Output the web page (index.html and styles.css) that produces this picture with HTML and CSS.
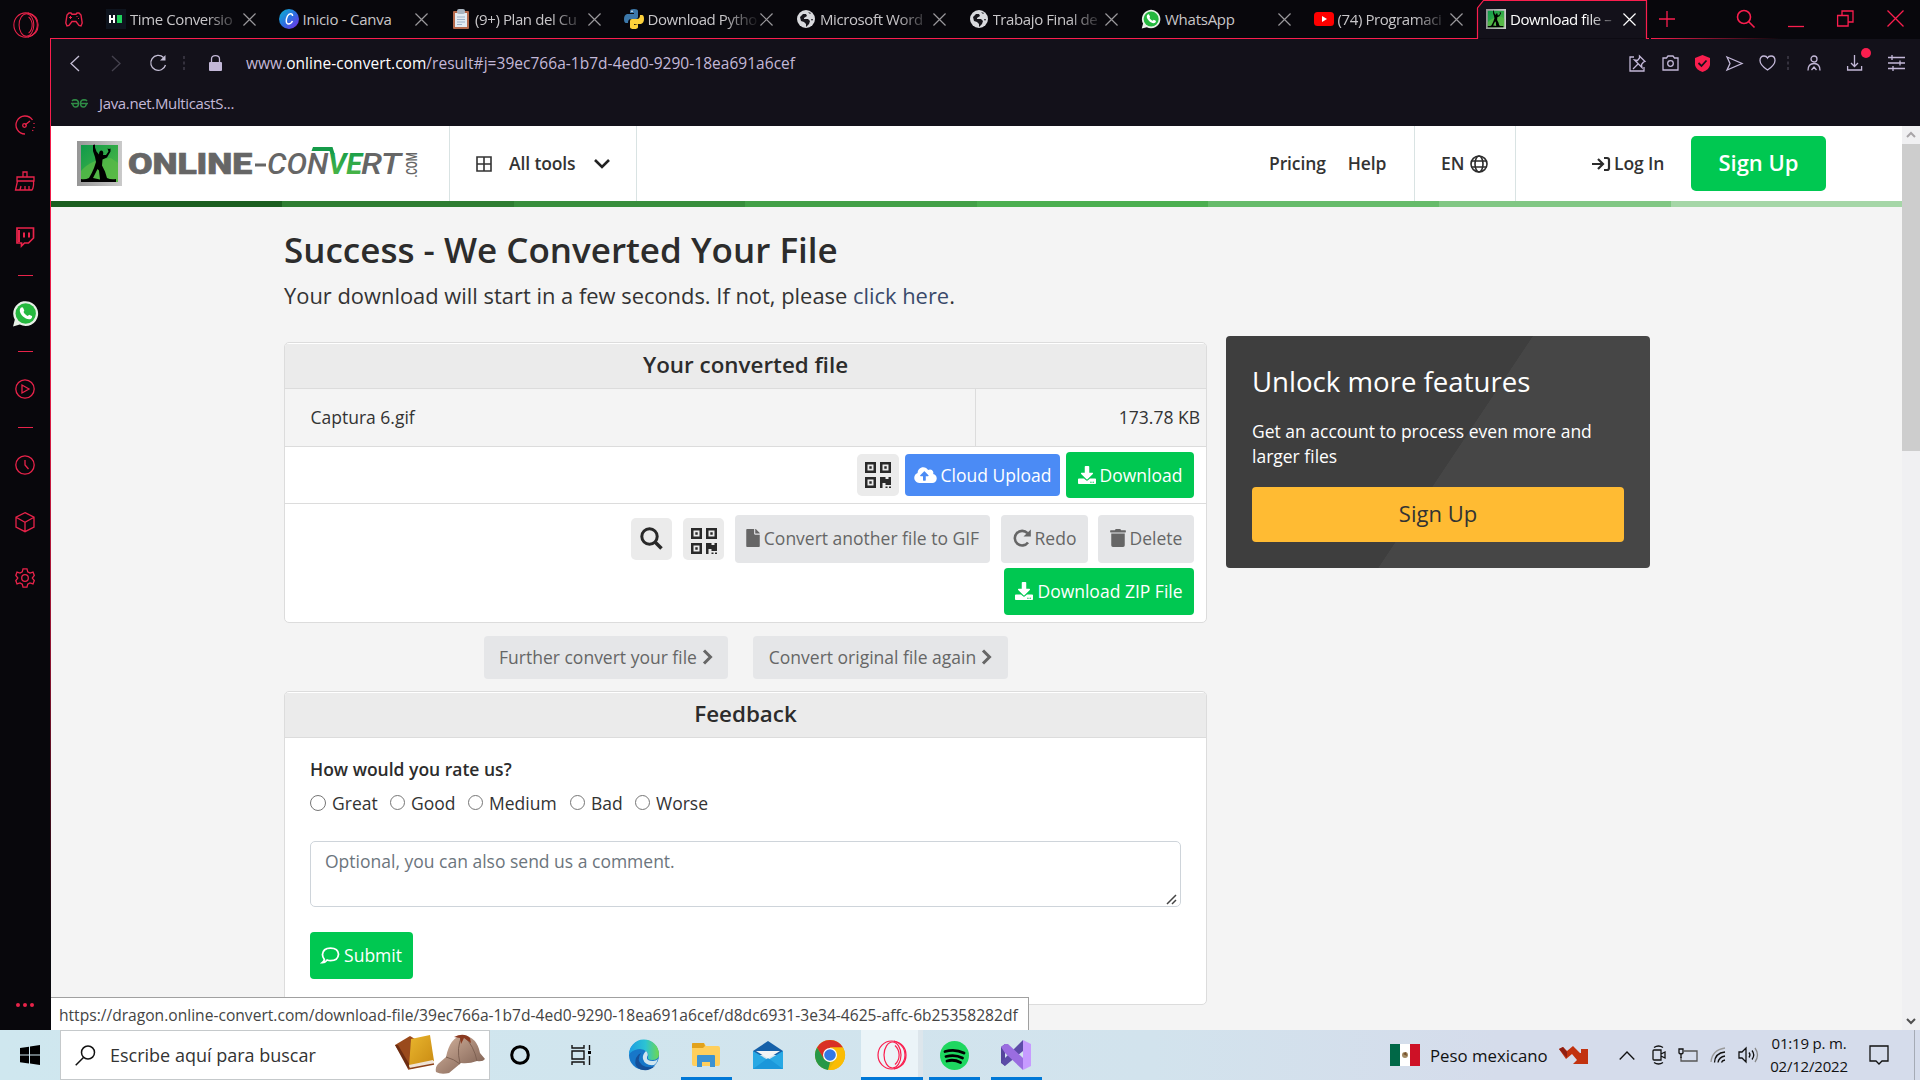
FILE: index.html
```html
<!DOCTYPE html>
<html lang="en">
<head>
<meta charset="utf-8">
<title>Download file – Online-Convert</title>
<link rel="stylesheet" href="styles.css">
</head>
<body>
<svg class="defs" width="0" height="0">
  <defs>
    <linearGradient id="gLogo" x1="0" y1="0" x2="1" y2="1"><stop offset="0" stop-color="#0f9a4a"/><stop offset="1" stop-color="#56bb46"/></linearGradient>
    <linearGradient id="gFrame" x1="0" y1="0" x2="1" y2="0"><stop offset="0" stop-color="#969696"/><stop offset="1" stop-color="#cacaca"/></linearGradient>
    <linearGradient id="gVe" x1="0" y1="0" x2="0" y2="1"><stop offset="0" stop-color="#0f9a4a"/><stop offset="1" stop-color="#56bb46"/></linearGradient>
    <linearGradient id="gCanva" x1="0" y1="0" x2="1" y2="1"><stop offset="0" stop-color="#08b6cf"/><stop offset=".5" stop-color="#2c6fe0"/><stop offset="1" stop-color="#7d2ae8"/></linearGradient>
    <linearGradient id="gEdge" x1="0" y1="0" x2="1" y2="0"><stop offset="0" stop-color="#1b9de2"/><stop offset=".55" stop-color="#2cc3d4"/><stop offset="1" stop-color="#6fd84f"/></linearGradient>
    <linearGradient id="gHat" x1="0" y1="0" x2="1" y2="1"><stop offset="0" stop-color="#d9b8a2"/><stop offset="1" stop-color="#77594c"/></linearGradient>
    <linearGradient id="gBook" x1="0" y1="0" x2="1" y2="1"><stop offset="0" stop-color="#e9b62e"/><stop offset="1" stop-color="#c98a12"/></linearGradient>
  </defs>
  <symbol id="x" viewBox="0 0 14 14"><path d="M.5 .5l13 13M13.500 .5l-13 13" fill="none" stroke="currentColor" stroke-width="1.300"/></symbol>
  <symbol id="logo" viewBox="0 0 45 45"><rect width="45" height="45" fill="url(#gFrame)"/><rect x="4" y="4" width="37" height="37" fill="url(#gLogo)"/><path d="M4 30Q14 18 34 17L41 22V41H4z" fill="#5dbb46" opacity=".7"/><path d="M4 38q4 1 8-1 3-5 5-10l2-6-1-5-2-6 0-6 2-.5 0 3 1.500 4 2.500 3q0-4 2.500-4 2.500.500 1.500 4.500l3 0 2.500-3.500-1-3 1.500.500 1.500-.500 0 3-3.500 6-4.500 2-.5 6 3 6 2 6.500q4 2 9 1V41H4zm12-1l7 1.500-1-9-1.500-1.500z" fill="#000"/></symbol>
  <symbol id="globe" viewBox="0 0 18 18"><circle cx="9" cy="9" r="9" fill="#d9dade"/><path d="M3 7l3-3 3 0 1 2-3 2 0 1 4 0 2 2-1 3-3 3 0-3-2-2-3-1zM11 2l3 1-1 1zM14 9l2 0-1 2z" fill="#17161c"/></symbol>
  <symbol id="wa" viewBox="0 0 26 26"><path d="M1 25.500L2.700 19A12 12 0 1 1 7.500 23.700z" fill="#e8f0e8"/><circle cx="13.200" cy="13" r="9.800" fill="#25b83f"/><path d="M8.500 7.500c1-1 2-.6 2.300.2l1 2.300c.1.400-.8 1.400-.8 1.400 1 2 2.300 3.100 4.200 4l1.300-1.300 2.700 1.300c.5.300 0 2-.8 2.600-4 2.200-10.500-3.500-10.900-7.500 0-1.400.5-2.500 1-3z" fill="#fff"/></symbol>
  <symbol id="dl" viewBox="0 0 512 512"><path fill="currentColor" d="M216 0h80c13.300 0 24 10.700 24 24v168h87.700c17.800 0 26.700 21.500 14.100 34.100L269.700 378.300c-7.500 7.500-19.800 7.500-27.300 0L90.100 226.100c-12.600-12.600-3.700-34.100 14.100-34.100H192V24c0-13.300 10.700-24 24-24zm296 376v112c0 13.300-10.700 24-24 24H24c-13.300 0-24-10.700-24-24V376c0-13.300 10.700-24 24-24h146.700l49 49c20.100 20.100 52.500 20.100 72.600 0l49-49H488c13.300 0 24 10.700 24 24zm-124 88c0-11-9-20-20-20s-20 9-20 20 9 20 20 20 20-9 20-20zm64 0c0-11-9-20-20-20s-20 9-20 20 9 20 20 20 20-9 20-20z"/></symbol>
  <symbol id="qr" viewBox="0 0 26 26"><path fill="currentColor" fill-rule="evenodd" d="M0 0h11v11H0zM2.500 2.500v6h6v-6zM4.300 4.300h2.400v2.400H4.300zM15 0h11v11H15zM17.500 2.500v6h6v-6zM19.300 4.300h2.400v2.400h-2.400zM0 15h11v11H0zM2.500 17.500v6h6v-6zM4.300 19.300h2.400v2.400H4.300zM15 15h5.500v2h3v-2H26v8h-5.500v-2h-3v5H15zM20.500 24.500h2V26h-2zM24 24.500h2V26h-2z"/></symbol>
  <symbol id="chev" viewBox="0 0 11 16"><path d="M2 1.500l6.500 6.500-6.500 6.500" fill="none" stroke="currentColor" stroke-width="3"/></symbol>
  <symbol id="opera" viewBox="0 0 30 30"><g fill="none" stroke="currentColor" stroke-width="1.200"><ellipse cx="14.500" cy="15" rx="13.500" ry="14"/><ellipse cx="15.500" cy="15" rx="8.500" ry="13"/><path d="M17 1q12 3 12 14T17 29M18 5.500c5.500 5 5.500 14 0 19"/></g></symbol>
</svg>

<div class="screen">
<div class="browser">
  <nav class="sidebar">
    <svg class="side-opera" width="26" height="26"><use href="#opera"/></svg>
    <svg class="si speed" viewBox="0 0 20 20"><path d="M10 19A9 9 0 1 1 17.500 5M19 8v1M19 12v1M18 15l-.500 1M10 10l5-4"/><circle cx="9.500" cy="10.500" r="1.800"/></svg>
    <svg class="si broom" viewBox="0 0 20 20"><path d="M8 6V1h4v5M2 6h17v4H2zM2.500 10L.500 19h16.500q2-3 1.500-9M5 19l1-4M10 19v-4M14 19v-4"/></svg>
    <svg class="si twitch" viewBox="0 0 20 20"><path d="M2 1h16.500v10l-5 5h-4l-3 3v-3H2z" stroke-width="1.700"/><path d="M9 5.500v5M14 5.500v5M4 3v12" stroke-width="2"/></svg>
    <i class="dash"></i>
    <svg class="side-wa" width="27" height="27"><use href="#wa"/></svg>
    <i class="dash"></i>
    <svg class="si play" viewBox="0 0 20 20"><circle cx="10" cy="10" r="9.200"/><path d="M7 6v8l7-4z"/></svg>
    <i class="dash"></i>
    <svg class="si clock" viewBox="0 0 20 20"><circle cx="10" cy="10" r="9.200"/><path d="M10 5v5l3.500 4"/></svg>
    <svg class="si cube" viewBox="0 0 20 20"><path d="M10 .700l9 4.500v10l-9 4.500-9-4.500v-10zM1 5.200l9 5 9-5M10 10v9.500"/></svg>
    <svg class="si gear" viewBox="0 0 20 20"><path d="M8 .800h4l.7 3 2.300 1.300 3-1 1.300 3.400-2 2.500 2 2.500-1.300 3.400-3-1-2.300 1.300-.7 3H8l-.7-3L5 14.900l-3 1L.800 12.500l2-2.500-2-2.500L2 4.100l3 1 2.300-1.300z"/><circle cx="10" cy="10" r="3.300"/></svg>
    <div class="more"><i></i><i></i><i></i></div>
  </nav>

  <div class="window">
    <div class="tabs">
      <div class="lead"><svg width="18" height="15" viewBox="0 0 18 15"><path d="M4 1h2l1 1.200h4L12 1h2l2 2 1.200 8-1.200 3-2-.5-3-4H7l-3 4-2 .500-1.200-3L2 3z" fill="none" stroke="#e8234a" stroke-width="1.400"/><path d="M4 5.500h3M5.500 4v3M11.500 4.500h1M13 6.500h1" stroke="#e8234a"/></svg></div>
      <div class="tab"><svg class="fav" viewBox="0 0 20 20"><rect width="20" height="20" fill="#0e141e"/><path d="M4 6v8M8 6v8M4 10h4" stroke="#fff" stroke-width="2"/><rect x="11" y="6" width="5" height="8" fill="#1fd15c"/></svg><span class="t">Time Conversio</span><svg class="x"><use href="#x"/></svg></div>
      <div class="tab"><svg class="fav" viewBox="0 0 20 20"><circle cx="10" cy="10" r="10" fill="url(#gCanva)"/><path d="M13.500 7c.3-3-3.500-3-5 0-2 4-1.500 8 1 8s3.500-2 4-3" fill="none" stroke="#fff" stroke-width="1.500"/></svg><span class="t whole">Inicio - Canva</span><svg class="x"><use href="#x"/></svg></div>
      <div class="tab"><svg class="fav" viewBox="0 0 20 20"><rect x="2" y="2" width="16" height="18" rx="1" fill="#b5694b"/><rect x="4" y="4" width="12" height="14" fill="#e4ebf2"/><rect x="6" y="0" width="8" height="5" rx="2" fill="#a9b4c0"/><path d="M6 8h8M6 10.500h8M6 13h8M6 15.500h5" stroke="#9db2c8"/></svg><span class="t">(9+) Plan del Cu</span><svg class="x"><use href="#x"/></svg></div>
      <div class="tab"><svg class="fav" viewBox="0 0 20 20"><path d="M6 5V2q0-2 4-2t4 2v6q0 2-2 2H7q-3 0-3 4H2Q0 14 0 10t3-5h7V4H6z" fill="#3c78aa"/><path d="M14 15v3q0 2-4 2t-4-2v-6q0-2 2-2h5q3 0 3-4h2q2 0 2 4t-3 5h-7v1z" fill="#fdd13b"/><circle cx="8" cy="2.300" r=".8" fill="#fff"/></svg><span class="t">Download Pytho</span><svg class="x"><use href="#x"/></svg></div>
      <div class="tab"><svg class="fav g"><use href="#globe"/></svg><span class="t">Microsoft Word</span><svg class="x"><use href="#x"/></svg></div>
      <div class="tab"><svg class="fav g"><use href="#globe"/></svg><span class="t">Trabajo Final de</span><svg class="x"><use href="#x"/></svg></div>
      <div class="tab"><svg class="fav"><use href="#wa"/></svg><span class="t whole">WhatsApp</span><svg class="x"><use href="#x"/></svg></div>
      <div class="tab"><svg class="fav" viewBox="0 0 20 20"><rect y="3" width="20" height="14" rx="3.500" fill="#f00"/><path d="M8 7v6l5-3z" fill="#fff"/></svg><span class="t">(74) Programaci</span><svg class="x"><use href="#x"/></svg></div>
      <div class="tab active"><svg class="outline" width="172" height="39"><path d="M0 38.500H1.500V8L7.500 .500H170.500V38.500H173" fill="#13111a" stroke="#fa1e4e" stroke-width="1.200"/></svg><svg class="fav"><use href="#logo"/></svg><span class="t">Download file –</span><svg class="x"><use href="#x"/></svg></div>
      <div class="controls">
        <svg width="16" height="16" viewBox="0 0 16 16"><path d="M8 0v16M0 8h16"/></svg>
        <svg width="19" height="19" viewBox="0 0 19 19"><circle cx="8" cy="8" r="6.500" stroke-width="1.600"/><path d="M12.500 12.500l6 6" stroke-width="1.600"/></svg>
        <svg width="16" height="16" viewBox="0 0 16 16"><path d="M0 15.500h16"/></svg>
        <svg width="17" height="17" viewBox="0 0 17 17"><path d="M.600 5.500h10.500v10.500H.600zM5 5V1h11v11h-4.500"/></svg>
        <svg width="17" height="17" viewBox="0 0 17 17"><path d="M.500 .500l16 16M16.500 .500l-16 16"/></svg>
      </div>
    </div>

    <div class="toolbar">
      <svg class="nav" width="10" height="17" viewBox="0 0 10 17"><path d="M9 1L1 8.500 9 16"/></svg>
      <svg class="nav off" width="10" height="17" viewBox="0 0 10 17"><path d="M1 1l8 7.500L1 16"/></svg>
      <svg class="nav" width="18" height="18" viewBox="0 0 18 18"><path d="M14.500 3.500A7.500 7.500 0 1 0 16.500 11"/><path d="M16.500 1v5.500H11z" fill="#c5bfd6" stroke="none"/></svg>
      <svg class="sep" width="2" height="14"><path d="M1 0v14" stroke="#34313d" stroke-width="2" stroke-dasharray="3 2.500"/></svg>
      <svg class="lock" width="13" height="16" viewBox="0 0 13 16"><rect y="7" width="13" height="9" rx="1" fill="#c3b8d8"/><path d="M2.500 7V4q0-3.300 4-3.300t4 3.300v3" fill="none" stroke="#c3b8d8" stroke-width="1.300"/></svg>
      <span class="url">www.<b>online-convert.com</b>/result#j=39ec766a-1b7d-4ed0-9290-18ea691a6cef</span>
      <div class="tools">
        <svg width="17" height="17" viewBox="0 0 17 17"><path d="M5 2H1v14h14v-4M10.500 1L16 6.500l-1.500.500-2 2.500.5 3L5.500 5l3 .5 2-2.500zM9 9l-5 5"/></svg>
        <svg width="17" height="16" viewBox="0 0 17 16"><path d="M1 3h3.500l1.500-2h5l1.500 2H16v12H1z"/><circle cx="8.500" cy="8.500" r="2.800"/></svg>
        <svg width="15" height="17" viewBox="0 0 15 17"><path d="M7.500 0L15 3v7q-1 5-7.500 7Q1 15 0 10V3z" fill="#fa1e4e" stroke="none"/><path d="M3.500 8l3 3 5-5.500" stroke="#13111a" stroke-width="1.800"/></svg>
        <svg width="17" height="15" viewBox="0 0 17 15"><path d="M1 1l15 6.500L1 14l3-6.500z"/></svg>
        <svg width="17" height="16" viewBox="0 0 17 16"><path d="M8.500 15Q1 10 1 5.500T5 1q2.500 0 3.500 2Q9.500 1 12 1q4 0 4 4.500T8.500 15z"/></svg>
        <svg width="2" height="14"><path d="M1 0v14" class="dots"/></svg>
        <svg width="14" height="16" viewBox="0 0 14 16"><circle cx="7" cy="4" r="3"/><path d="M1 15.500q0-7 6-7t6 7M4.500 15l2.500-3 2.500 3"/></svg>
        <span class="dlwrap"><svg width="15" height="16" viewBox="0 0 15 16"><path d="M7.500 0v11M4 8l3.500 3.500L11 8M.600 11v4h14v-4"/></svg><i></i></span>
        <svg width="17" height="16" viewBox="0 0 17 16"><path d="M0 2.500h17M0 8h17M0 13.500h17M4 0v5M12 5.500v5M5 11v5"/></svg>
      </div>
    </div>
    <div class="bookmarks"><svg width="17" height="9" viewBox="0 0 17 9"><path d="M0 4.500h7.500M1 2q1-1.200 3-1.200 3.500.2 3.500 3.700T4.500 8Q2 8 1.500 4.500M17 4.500H9.500M16 2q-1-1.200-3-1.200-3.500.2-3.500 3.700T12.500 8q2.500 0 3-3.500" fill="none" stroke="#2f8d46" stroke-width="1.500"/></svg><span>Java.net.MulticastS...</span></div>

    <div class="viewport">
      <div class="page">
        <header class="head">
          <div class="brand">
            <svg width="45" height="45"><use href="#logo"/></svg>
            <svg class="word" width="292" height="45" viewBox="0 0 292 45">
              <g font-family="Roboto, sans-serif" fill="#666">
                <text x="-1" y="33" font-size="29.500" font-weight="900" stroke="#666" stroke-width=".6" textLength="124" lengthAdjust="spacingAndGlyphs">ONLINE</text>
                <rect x="126" y="22.500" width="11" height="3"/>
                <text x="138" y="33" font-size="29.500" font-weight="500" font-style="italic" textLength="61" lengthAdjust="spacingAndGlyphs">CON</text>
                <text x="199" y="33" font-size="29.500" font-weight="700" font-style="italic" fill="url(#gVe)" textLength="34" lengthAdjust="spacingAndGlyphs">VE</text>
                <text x="232" y="33" font-size="29.500" font-weight="500" font-style="italic" textLength="40" lengthAdjust="spacingAndGlyphs">RT</text>
                <path d="M182.500 10l1.500-4h19.500l2 6.500h-4l-1-2.500z" fill="#159b49"/>
                <text transform="translate(287.500 36.500) rotate(-90)" font-size="14" font-weight="600" textLength="25" lengthAdjust="spacingAndGlyphs">.COM</text>
              </g>
            </svg>
          </div>
          <div class="alltools"><svg width="16" height="16" viewBox="0 0 16 16"><path d="M1 1h14v14H1zM8 1v14M1 8h14" fill="none" stroke="#333" stroke-width="1.600"/></svg><span>All tools</span><svg width="16" height="10" viewBox="0 0 16 10"><path d="M1 1l7 7 7-7" fill="none" stroke="#222" stroke-width="2.600"/></svg></div>
          <div class="links"><span class="pricing">Pricing</span><span class="help">Help</span></div>
          <div class="lang"><span>EN</span><svg width="18" height="18" viewBox="0 0 18 18"><g fill="none" stroke="#2c2c2c" stroke-width="1.600"><circle cx="9" cy="9" r="8"/><ellipse cx="9" cy="9" rx="4" ry="8"/><path d="M1.500 6h15M1.500 12h15"/></g></svg></div>
          <div class="login"><svg width="18" height="14" viewBox="0 0 18 14"><path d="M0 7h10M6 2l5 5-5 5M12 1h3q2 0 2 2v8q0 2-2 2h-3" fill="none" stroke="#2c2c2c" stroke-width="2.200"/></svg><span>Log In</span></div>
          <div class="signup">Sign Up</div>
        </header>
        <div class="rainbow"><i></i><i></i><i></i><i></i><i></i><i></i><i></i><i></i></div>

        <main class="content">
          <section class="left">
            <h1>Success - We Converted Your File</h1>
            <p class="sub">Your download will start in a few seconds. If not, please <a>click here</a>.</p>
            <div class="card files">
              <h2>Your converted file</h2>
              <div class="filerow"><span class="name">Captura 6.gif</span><span class="size">173.78 KB</span></div>
              <div class="actions one">
                <span class="sq"><svg width="26" height="26"><use href="#qr"/></svg></span>
                <span class="btn blue"><svg width="23" height="18" viewBox="0 0 640 512"><path fill="#fff" d="M537.600 226.600c4.100-10.700 6.400-22.400 6.400-34.600 0-53-43-96-96-96-19.700 0-38.100 6-53.300 16.200C367 64.200 315.300 32 256 32c-88.400 0-160 71.600-160 160 0 2.700.1 5.400.2 8.100C40.200 219.800 0 273.200 0 336c0 79.500 64.500 144 144 144h368c70.700 0 128-57.300 128-128 0-61.900-44-113.600-102.400-125.400zM393.400 288H328v112c0 8.800-7.200 16-16 16h-48c-8.800 0-16-7.200-16-16V288h-65.400c-14.300 0-21.400-17.200-11.300-27.300l105.400-105.400c6.200-6.200 16.400-6.200 22.600 0l105.400 105.400c10.100 10.100 2.900 27.300-11.300 27.300z"/></svg>Cloud Upload</span>
                <span class="btn green dlbtn"><svg width="18" height="18"><use href="#dl"/></svg>Download</span>
              </div>
              <div class="actions two">
                <span class="sq find"><svg width="23" height="23" viewBox="0 0 23 23"><circle cx="9.500" cy="9.500" r="7.700" fill="none" stroke="#292929" stroke-width="3"/><path d="M14.500 14.500l7 7" stroke="#292929" stroke-width="3.600"/></svg></span>
                <span class="sq low"><svg width="26" height="26"><use href="#qr"/></svg></span>
                <span class="btn grey conv"><svg width="14" height="18" viewBox="0 0 384 512"><path fill="#666" d="M224 136V0H24C10.700 0 0 10.700 0 24v464c0 13.300 10.700 24 24 24h336c13.300 0 24-10.700 24-24V160H248c-13.200 0-24-10.800-24-24zm160-14.100v6.100H256V0h6.100c6.400 0 12.500 2.500 17 7l97.900 98c4.500 4.500 7 10.600 7 16.900z"/></svg>Convert another file to GIF</span>
                <span class="btn grey redo"><svg width="18" height="18" viewBox="0 0 18 18"><path d="M15 13.500A7.300 7.300 0 1 1 14.500 4.200" fill="none" stroke="#666" stroke-width="2.600"/><path d="M17.800 .500v7H10.500z" fill="#666"/></svg>Redo</span>
                <span class="btn grey del"><svg width="16" height="18" viewBox="0 0 448 512"><path fill="#666" d="M32 464a48 48 0 0 0 48 48h288a48 48 0 0 0 48-48V128H32zM432 32H312l-9.400-18.700A24 24 0 0 0 281.100 0H166.800a23.700 23.700 0 0 0-21.400 13.300L136 32H16A16 16 0 0 0 0 48v32a16 16 0 0 0 16 16h416a16 16 0 0 0 16-16V48a16 16 0 0 0-16-16z"/></svg>Delete</span>
              </div>
              <div class="actions three"><span class="btn green zip"><svg width="18" height="18"><use href="#dl"/></svg>Download ZIP File</span></div>
            </div>
            <div class="again"><span class="btn grey further">Further convert your file<svg width="11" height="16"><use href="#chev"/></svg></span><span class="btn grey orig">Convert original file again<svg width="11" height="16"><use href="#chev"/></svg></span></div>
            <div class="card feedback">
              <h2>Feedback</h2>
              <p class="rate">How would you rate us?</p>
              <div class="radios"><i class="r big"></i><span class="w1">Great</span><i class="r"></i><span class="w2">Good</span><i class="r"></i><span class="w3">Medium</span><i class="r"></i><span class="w4">Bad</span><i class="r"></i><span>Worse</span></div>
              <div class="comment">Optional, you can also send us a comment.<svg width="10" height="10" viewBox="0 0 10 10"><path d="M0 10L9 1M5 10l4-4" stroke="#444" stroke-width="1.500"/></svg></div>
              <span class="btn green submit"><svg width="19" height="17" viewBox="0 0 20 18"><path d="M1.500 16.500q2-1.500 2-3.500-2-2-2-5Q2 1.200 10 1.200t8.500 6.500Q18 14.500 10 14.500q-2 0-3.500-.7-2 2.700-5 2.700z" fill="none" stroke="#fff" stroke-width="1.900"/></svg>Submit</span>
            </div>
          </section>
          <aside class="promo">
            <h3>Unlock more features</h3>
            <p>Get an account to process even more and<br>larger files</p>
            <span class="promo-btn">Sign Up</span>
          </aside>
        </main>
      </div>
      <div class="scroll">
        <svg width="10" height="6" viewBox="0 0 10 6"><path d="M1 5l4-4 4 4" fill="none" stroke="#a8a5a8" stroke-width="2"/></svg>
        <i class="thumb"></i>
        <svg class="down" width="10" height="6" viewBox="0 0 10 6"><path d="M1 1l4 4 4-4" fill="none" stroke="#505050" stroke-width="2"/></svg>
      </div>
      <div class="status">https://dragon.online-convert.com/download-file/39ec766a-1b7d-4ed0-9290-18ea691a6cef/d8dc6931-3e34-4625-affc-6b25358282df</div>
    </div>
  </div>
</div>

<footer class="taskbar">
  <div class="start"><svg width="20" height="20" viewBox="0 0 20 20"><path d="M0 3l9-1.300V9.500H0zM10 1.500L20 0v9.500H10zM0 10.500h9v8L0 17.200zM10 10.500h10V20l-10-1.400z" fill="#000"/></svg></div>
  <div class="search">
    <svg width="21" height="21" viewBox="0 0 21 21"><circle cx="13" cy="7.500" r="6.500" fill="none" stroke="#111" stroke-width="1.500"/><path d="M8.500 12.500L.700 20.300" stroke="#111" stroke-width="1.500"/></svg>
    <span>Escribe aquí para buscar</span>
    <svg class="art" width="92" height="44" viewBox="0 0 92 44">
      <path d="M1 12l15-9 10 6-7 27-4-1z" fill="#9a4a1c"/><path d="M1 12l3 0 13 22-3 2z" fill="#6d2d12"/><path d="M17 6l19-4 4 26-25 6z" fill="url(#gBook)"/><path d="M15 32l24-5 1 3-24 6z" fill="#efe3d6"/><path d="M14 36l26-5" stroke="#8c4017" stroke-width="1.500"/>
      <path d="M52 24q4-20 17-22 14 2 17 18l5 6q-2 3-8 2-8 3-16 2l-12 10q-8 2-13-1-1-5 2-8z" fill="url(#gHat)"/><path d="M52 24q8 2 14 7M68 3q-6 12-2 27M70 3q10 10 13 25" stroke="#7e6152" fill="none"/><path d="M60 4q10-5 16 1l1 5-7-5-3 6-1-6z" fill="#8a3a20"/>
    </svg>
  </div>
  <div class="apps">
    <span><svg width="20" height="20" viewBox="0 0 20 20"><circle cx="10" cy="10" r="8.300" fill="none" stroke="#000" stroke-width="3"/></svg></span>
    <span class="view"><svg width="20" height="20" viewBox="0 0 20 20"><path d="M1 0v3h12V0M1 20v-3h12v3M1 6h12v8H1zM18.500 0v5M18.500 11v9" fill="none" stroke="#111" stroke-width="1.400"/><rect x="17" y="6" width="3" height="3"/></svg></span>
    <span><svg width="30" height="30" viewBox="0 0 30 30"><circle cx="15" cy="15" r="15" fill="#1777c9"/><path d="M0 15A15 15 0 0 1 30 14q0 6-7 6-5 0-4-3 1-2-1-5-5-5-12-2-5 2-6 5z" fill="url(#gEdge)"/><path d="M12 13q-5 7 1 12 6 4 13 1-5 5-12 4Q4 28 7 18q2-4 5-5z" fill="#155099"/><path d="M17 11q3 3 1 6-1 4 6 4 3 0 5-2-1 4-4 6-9 1-11-6-1-4 3-8z" fill="#d0e5ef"/></svg></span>
    <span class="run"><svg width="28" height="24" viewBox="0 0 28 24"><path d="M0 1q0-1 1-1h11l2 3h12q2 0 2 2v16q0 2-2 2H2q-2 0-2-2z" fill="#ffcf5c"/><path d="M0 1q0-1 1-1h11l1 3-2 2H0z" fill="#e2a21c"/><path d="M5 24V13q0-1 1-1h16q1 0 1 1v11h-5v-5h-8v5z" fill="#3c93d2"/></svg></span>
    <span><svg width="30" height="28" viewBox="0 0 30 28"><path d="M0 10L15 0l15 10v4H0z" fill="#1560a8"/><path d="M0 10l15 9 15-9v18H0z" fill="#28a8e4"/><path d="M0 28l15-11 15 11z" fill="#1b97da"/><path d="M3 10h24l-12 7.500z" fill="#f2f4f5"/></svg></span>
    <span><svg width="30" height="30" viewBox="0 0 30 30"><circle cx="15" cy="15" r="15" fill="#e2b90c"/><path d="M2 7.500A15 15 0 0 1 28 7.500H15L8.500 19z" fill="#d93025"/><path d="M2 7.500L9 19l6 3.500L13 30A15 15 0 0 1 2 7.500z" fill="#279847"/><path d="M15 7.500h13a15 15 0 0 1-14.500 22.500L22 18z" fill="#fbbc04"/><circle cx="15" cy="15" r="7" fill="#fff"/><circle cx="15" cy="15" r="5.800" fill="#3478e5"/></svg></span>
    <span class="on"><svg class="opera-red" width="30" height="30"><use href="#opera"/></svg></span>
    <span class="run"><svg width="29" height="29" viewBox="0 0 29 29"><circle cx="14.500" cy="14.500" r="14.500" fill="#1ed760"/><path d="M5 10.500q10-3 19 1.500M6 15.500q9-2.500 16.500 1.500M7 20q7-2 13.500 1.500" fill="none" stroke="#000" stroke-width="2.800" stroke-linecap="round"/></svg></span>
    <span class="run"><svg width="30" height="30" viewBox="0 0 30 30"><path d="M0 7l4-3v22l-4-3z" fill="#55459c"/><path d="M22 0v11L4 26l-4-4z" fill="#5c4ba8"/><path d="M0 7l4-3h3l15 14v12L4 13z" fill="#9a6de0"/><path d="M22 0l8 4v22l-8 4z" fill="#c79bff"/></svg></span>
  </div>
  <div class="tray">
    <svg class="flag" width="30" height="22" viewBox="0 0 30 22"><path d="M0 0h10v22H0z" fill="#006847"/><path d="M10 0h10v22H10z" fill="#fff"/><path d="M20 0h10v22H20z" fill="#ce1126"/><circle cx="15" cy="11" r="3" fill="#a38b64"/><path d="M13 10l4 2-1-4z" fill="#75502d"/></svg>
    <span class="peso">Peso mexicano</span>
    <svg class="trend" width="29" height="18" viewBox="0 0 29 18"><path d="M0 3l4-2 4 4 6-5 7 7 1 0V3h7v15H14l4-4-5-6-6 5z" fill="#c2320f"/><path d="M0 3l4-2 4 5 0 6z" fill="#8e2014"/></svg>
    <svg class="up" width="16" height="9" viewBox="0 0 16 9"><path d="M.700 8.500L8 1l7.300 7.500"/></svg>
    <svg width="14" height="20" viewBox="0 0 14 20"><path d="M2 2.500q4.500-3 9 0M2 17.500q4.500 3 9 0M2 5h7v10H2q-1 0-1-1V6q0-1 1-1zM9 9l4-2v6l-4-2"/></svg>
    <svg width="20" height="14" viewBox="0 0 20 14"><path d="M6 3h13v10H3V9" stroke="#555"/><path d="M1 1v4q2 2 4 0V1zM3 6v4M1 1h4"/></svg>
    <svg width="16" height="16" viewBox="0 0 16 16"><path d="M1 15Q2 3 15 1" stroke="#999"/><path d="M4.500 15.500Q5 6 15 5M8 15.500Q9 10 15 9M11.500 15.500q.5-2 3.500-2.500"/></svg>
    <svg width="20" height="16" viewBox="0 0 20 16"><path d="M1 5v6h3l4 4V1L4 5zM11 5.500q2 2.500 0 5M14 3.500q3.500 4.500 0 9"/><path d="M17 1q5 7 0 14" stroke="#888"/></svg>
    <div class="clocktext"><span>01:19 p. m.</span><span>02/12/2022</span></div>
    <svg class="note" width="20" height="20" viewBox="0 0 20 20"><path d="M1 1h18v15h-6l-3 3-3-3H1z"/></svg>
    <i class="peek"></i>
  </div>
</footer>
</div>
</body>
</html>
```

FILE: styles.css
```css
* { box-sizing: border-box; }
body { margin: 0; font-family: "Open Sans", "Noto Sans", sans-serif; color: #333; background: #f4f4f4; overflow: hidden; }
h1, h2, h3, p { margin: 0; }
i { display: block; font-style: normal; }
.defs { position: absolute; }
svg { display: block; flex: none; overflow: visible; }
.screen { width: 1920px; height: 1080px; display: flex; flex-direction: column; }
.browser { display: flex; height: 1030px; }

/* side rail */
.sidebar { width: 51px; display: flex; flex-direction: column; align-items: center; padding: 12px 2px 0 0; color: #e8234a;
  background: linear-gradient(#fa1e4e, #e01c46 35%, #8d1531 60%, #08070c 88%) 50px 38px / 1px 100% no-repeat #08070c; }
.side-opera { margin-left: 2px; }
.si { width: 20px; height: 20px; fill: none; stroke: #e8234a; stroke-width: 1.3; }
.speed { margin-top: 77px; }
.broom { margin-top: 36px; }
.twitch { margin-top: 36px; }
.dash { width: 15px; height: 1px; background: #e8234a; margin-top: 28px; margin-left: 1px; }
.side-wa { margin-top: 24px; margin-left: 1px; }
.side-wa + .dash { margin-top: 24px; }
.play { margin-top: 27px; }
.clock { margin-top: 27px; }
.cube { margin-top: 37px; }
.gear { margin-top: 36px; }
.more { display: flex; gap: 3px; margin-top: 415px; }
.more i { width: 4px; height: 4px; border-radius: 50%; background: #e8234a; }

/* browser chrome */
.window { flex: 1; display: flex; flex-direction: column; min-width: 0; }
.tabs { height: 39px; display: flex; background: #08070c; font-size: 15px; color: #c8c6c9; }
.lead { flex: none; width: 47px; border-bottom: 1px solid #fa1e4e; padding: 12px 0 0 14px; }
.tab { flex: none; width: 172.5px; border-bottom: 1px solid #fa1e4e; display: flex; align-items: center; padding: 0 15px 0 8px; position: relative; }
.fav { width: 20px; height: 20px; margin-right: 4px; position: relative; }
.fav.g { width: 18px; height: 18px; margin: 0 5px 0 1px; }
.t { width: 109px; white-space: nowrap; letter-spacing: -.4px; line-height: 38px; position: relative;
  -webkit-mask-image: linear-gradient(90deg, #000 76px, transparent 112px); mask-image: linear-gradient(90deg, #000 76px, transparent 112px); }
.whole { letter-spacing: -.25px; -webkit-mask-image: none; mask-image: none; }
.x { width: 13px; height: 13px; margin-left: auto; color: #9a989c; position: relative; }
.active { color: #fff; border-bottom: 0; padding-bottom: 1px; }
.active .x { color: #fff; }
.outline { position: absolute; left: -2px; top: 0; }
.controls { flex: 1; min-width: 0; display: flex; align-items: center; padding: 0 0 2px 8px;
  background: linear-gradient(90deg, #fa1e4e, transparent) 0 38px / 130px 1px no-repeat; }
.controls svg { fill: none; stroke: #fa1e4e; stroke-width: 1.3; margin-right: 33px; }
.controls svg:first-child { margin-right: 61px; }
.controls svg:last-child { margin-right: 0; }
.toolbar { height: 48px; background: #13111a; display: flex; align-items: center; padding: 0 15px 0 19px; }
.nav { fill: none; stroke: #c5bfd6; stroke-width: 1.3; }
.nav + .nav { margin-left: 31px; }
.off { stroke: #45424e; }
.off + .nav { margin-left: 28px; }
.sep { margin-left: 16px; }
.lock { margin-left: 24px; }
.url { margin-left: 24px; font-size: 15.5px; color: #c3b8d8; letter-spacing: .03px; white-space: nowrap; }
.url b { font-weight: 400; color: #fff; }
.tools { margin-left: auto; display: flex; align-items: center; gap: 16px; }
.tools svg { fill: none; stroke: #c3b8d8; stroke-width: 1.3; }
.tools .dots { stroke: #34313d; stroke-width: 2; stroke-dasharray: 3 2.5; }
.tools > svg:nth-child(6) { margin-left: -5px; }
.tools > svg:nth-child(7) { margin-left: 2px; }
.dlwrap { position: relative; margin: 0 10px; }
.dlwrap i { position: absolute; left: 14px; top: -7px; width: 10px; height: 10px; border-radius: 50%; background: #fa1e4e; }
.bookmarks { height: 39px; background: #13111a; display: flex; align-items: center; gap: 11px; padding: 0 0 7px 20px; font-size: 15px; letter-spacing: -.35px; color: #c3b8d8; }

/* page */
.viewport { height: 904px; display: flex; position: relative; overflow: hidden; background: #f4f4f4; }
.page { width: 1851px; }
.head { height: 75px; background: #fff; display: flex; font-size: 17.5px; font-weight: 600; letter-spacing: -.12px; color: #333; }
.head span { padding-bottom: 2px; }
.brand { width: 399px; border-right: 1px solid #d9e3e3; display: flex; gap: 7px; padding: 15px 0 0 26px; }
.alltools { width: 187px; border-right: 1px solid #d9e3e3; display: flex; align-items: center; padding-left: 26px; }
.alltools span { width: 67px; margin: 0 18px 0 17px; white-space: nowrap; }
.links { margin-left: auto; width: 146px; display: flex; align-items: center; gap: 22px; border-right: 1px solid #d9e3e3; }
.lang { width: 101px; display: flex; align-items: center; gap: 6px; padding-left: 26px; border-right: 1px solid #d9e3e3; }
.login { width: 175px; display: flex; align-items: center; gap: 4px; padding-left: 76px; white-space: nowrap; }
.signup { width: 135px; height: 55px; margin: 10px 76px 0 0; background: #00c851; border-radius: 5px; color: #fff; font-weight: 600; font-size: 22px; line-height: 53px; letter-spacing: 0; text-align: center; }
.rainbow { height: 6px; display: flex; }
.rainbow i { flex: 1; background: #1b5e20; }
.rainbow i:nth-child(2) { background: #2e7d32; }
.rainbow i:nth-child(3) { background: #388e3c; }
.rainbow i:nth-child(4) { background: #43a047; }
.rainbow i:nth-child(5) { background: #4caf50; }
.rainbow i:nth-child(6) { background: #66bb6a; }
.rainbow i:nth-child(7) { background: #81c784; }
.rainbow i:nth-child(8) { background: #a5d6a7; }
.content { display: flex; align-items: flex-start; gap: 19px; padding-left: 233px; }
.left { width: 923px; }
h1 { margin-top: 19px; font-size: 35px; font-weight: 600; line-height: 48px; color: #2c2c2c; white-space: nowrap; }
.sub { margin-top: 5px; font-size: 21.9px; line-height: 34px; white-space: nowrap; }
.sub a { color: #3a4a6b; }
.card { background: #fff; border: 1px solid #dcdcdc; border-radius: 5px; overflow: hidden; }
.card h2 { margin-top: 1px; height: 45px; background: #ebebeb; border-bottom: 1px solid #dcdcdc; font-size: 22.4px; font-weight: 600; line-height: 42px; text-align: center; color: #2c2c2c; }
.files { margin-top: 29px; height: 281px; }
.filerow { height: 58px; display: flex; background: #f4f4f4; border-bottom: 1px solid #dcdcdc; font-size: 17.5px; line-height: 56px; }
.name { flex: 1; padding-left: 25.5px; }
.size { width: 231px; border-left: 1px solid #dcdcdc; padding-right: 6px; text-align: right; }
.actions { display: flex; justify-content: flex-end; align-items: center; padding-right: 12px; }
.one { height: 57px; gap: 6px; border-bottom: 1px solid #dcdcdc; }
.two { height: 59px; padding-top: 11px; gap: 10px; align-items: flex-start; }
.three { height: 57px; padding-top: 5px; align-items: flex-start; }
.sq { width: 42px; height: 42px; border-radius: 5px; background: #ebebeb; display: grid; place-items: center; color: #292929; }
.two .sq { margin-top: 3px; width: 41px; }
.two .find { padding-bottom: 2px; }
.two .low { padding-top: 4px; margin: 3px 1px 0 1px; }
.btn { height: 47px; border-radius: 4px; display: flex; align-items: center; justify-content: center; gap: 4px; font-size: 17.5px; white-space: nowrap; padding-bottom: 1px; }
.green { background: #00c851; color: #fff; font-weight: 500; }
.blue { background: #4b8bf5; color: #fff; width: 155px; height: 42px; font-weight: 500; }
.grey { background: #e5e6e8; color: #666; }
.dlbtn { width: 128px; height: 46px; }
.conv { width: 255px; }
.redo { width: 87px; margin-left: 1px; }
.del { width: 96px; }
.two .btn { height: 48px; padding-bottom: 3px; }
.zip { width: 190px; }
.again { display: flex; justify-content: center; gap: 25px; padding-top: 13px; height: 68px; }
.again .btn { height: 43px; gap: 5px; padding-left: 1px; }
.further { width: 244px; }
.orig { width: 255px; }
.feedback { height: 314px; }
.rate { margin: 18px 0 0 25px; font-size: 17.5px; font-weight: 600; line-height: 26px; color: #2c2c2c; }
.radios { display: flex; align-items: center; height: 26px; margin: 8px 0 0 25px; font-size: 17.5px; }
.r { width: 15px; height: 15px; border: 1.5px solid #767676; border-radius: 50%; margin-right: 6px; margin-bottom: 1px; }
.big { width: 16px; height: 16px; }
.w1 { width: 58px; }
.w2 { width: 57px; }
.w3 { width: 81px; }
.w4 { width: 44px; }
.comment { margin: 25px 25px 0 25px; height: 66px; border: 1px solid #ced4da; border-radius: 5px; padding: 6px 14px; font-size: 17.5px; line-height: 26px; color: #6c757d; position: relative; }
.comment svg { position: absolute; right: 3px; bottom: 2px; }
.submit { width: 103px; margin: 25px 0 0 25px; }
.promo { margin-top: 129px; width: 424px; height: 232px; border-radius: 4px; padding: 25px 26px; color: #fff;
  background: linear-gradient(123.7deg, #3e3e3e 53%, #464646 53.1%); }
.promo h3 { font-size: 27.6px; font-weight: 400; line-height: 40px; white-space: nowrap; }
.promo p { margin-top: 18px; font-size: 17.5px; line-height: 25px; font-weight: 500; white-space: nowrap; }
.promo-btn { display: block; margin-top: 18px; height: 55px; border-radius: 4px; background: #fb3; color: #333; font-size: 22px; line-height: 53px; text-align: center; }
.scroll { width: 18px; display: flex; flex-direction: column; align-items: center; background: #f0f0f2; padding: 6px 0; }
.thumb { width: 18px; height: 307px; background: #cdcdcd; margin-top: 6px; }
.down { margin-top: auto; }
.status { position: absolute; left: 0; bottom: 0; width: 978px; height: 33px; background: #fff; border: 1px solid #a0a0a0; border-width: 1px 1px 0 0; padding-left: 8px; font-size: 15.6px; line-height: 35px; color: #444; white-space: nowrap; }

/* desktop taskbar */
.taskbar { height: 50px; display: flex; background: linear-gradient(90deg, #cfe7ef, #d2e3ed 60%, #d5dceb 78%); color: #111; }
.start { width: 60px; display: grid; place-items: center; }
.search { width: 430px; background: #fff; border: 1px solid #c5c9cb; display: flex; align-items: center; padding: 0 3px 0 14px; font-size: 18px; color: #333; white-space: nowrap; }
.search span { margin-left: 14px; }
.art { margin-left: auto; }
.apps { display: flex; margin-left: -1px; }
.apps span { width: 62px; display: grid; place-items: center; position: relative; }
.apps .view { padding-right: 3px; }
.apps .run { background: linear-gradient(#0078d7, #0078d7) 50% 100% / 51px 3px no-repeat; }
.apps .on { background: linear-gradient(#0078d7, #0078d7) 0 100% / 100% 3px no-repeat, linear-gradient(90deg, #ebf4f8 57px, #dde6ec 57px); }
.opera-red { color: #fa1e4e; }
.tray { margin-left: auto; display: flex; align-items: center; font-size: 16.8px; }
.tray svg { fill: none; stroke: #111; stroke-width: 1.3; margin-right: 12px; }
.tray .flag, .tray .trend { stroke: none; }
.tray .flag { margin-right: 10px; }
.peso { width: 129px; white-space: nowrap; }
.tray .trend { margin-right: 31px; }
.tray .up { margin-right: 17px; }
.clocktext { width: 78px; display: flex; flex-direction: column; align-items: center; font-size: 15px; line-height: 23px; letter-spacing: -.2px; white-space: nowrap; }
.tray .note { margin: 0 25px 0 21px; }
.peek { width: 1px; height: 50px; background: #a5abb5; margin-right: 5px; }
```
